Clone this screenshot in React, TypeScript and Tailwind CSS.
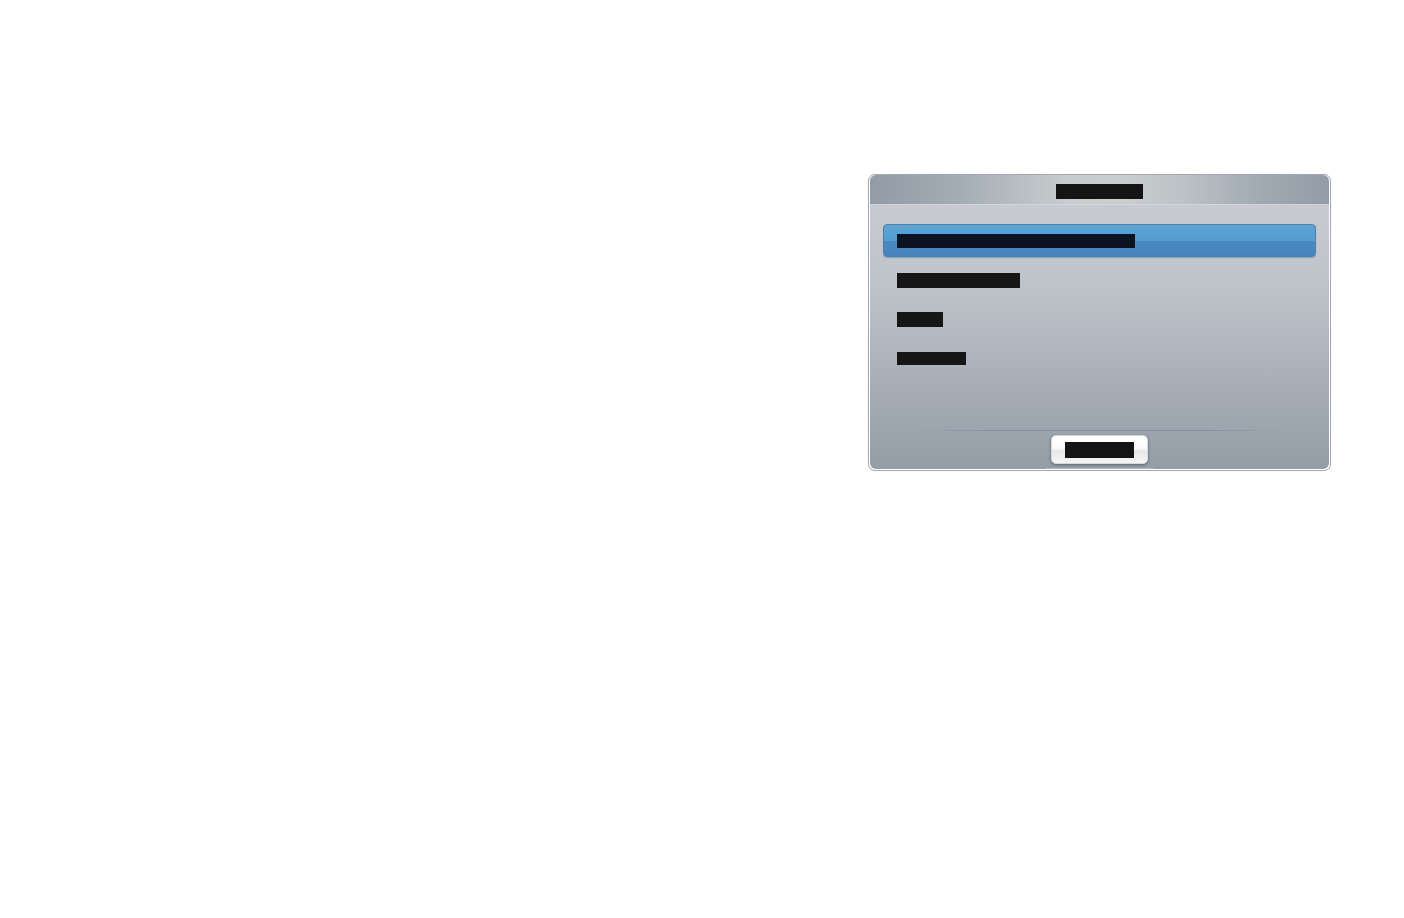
import React from "react";

const items = [
  { w: "w-[238px]", h: "h-[14px]", mt: "", selected: true },
  { w: "w-[123px]", h: "h-[15px]", mt: "mt-[1px]", selected: false },
  { w: "w-[46px]", h: "h-[15px]", mt: "mt-[2px]", selected: false },
  { w: "w-[69px]", h: "h-[13px]", mt: "mt-[2px]", selected: false },
];

export default function App() {
  return (
    <div className="min-h-screen w-full bg-white pt-[174px] pl-[868px] font-['Liberation_Sans',sans-serif]">
      <div className="w-[463px] h-[297px] rounded-[7px] border border-[#a4a8ad] bg-white px-px pb-px shadow-[0_0_1px_rgba(0,0,0,0.15)]">
        <div className="flex h-full flex-col overflow-hidden rounded-t-[6px] rounded-b-[6px]">
          {/* header */}
          <div className="flex h-[30px] shrink-0 items-center justify-center border-b border-[#d3d7da] bg-[linear-gradient(90deg,#929ba6_0%,#a5adb5_20%,#c6cccd_42%,#c9cecf_55%,#bcc3c6_68%,#a1a9b2_85%,#939ba6_100%)] pt-[4px]">
            <div className="h-[15px] w-[87px] bg-[#141414]" />
          </div>

          {/* body */}
          <div className="flex flex-1 flex-col bg-[linear-gradient(180deg,#c7cbd1_0%,#bec3c9_30%,#a9b0b8_65%,#949ca6_100%)]">
            <div className="flex flex-col gap-[6px] px-[13px] pt-[19px]">
              {items.map((it, i) => (
                <div
                  key={i}
                  className={
                    it.selected
                      ? "flex h-[33px] items-center rounded-[4px] border border-[#4f7fa8] bg-[linear-gradient(180deg,#5ba5d4_0%,#559ccd_50%,#4889c1_52%,#4784bd_100%)] px-[13px] shadow-[0_1px_1px_rgba(60,80,100,0.35)]"
                      : "flex h-[33px] items-center px-[14px]"
                  }
                >
                  <div className={`${it.w} ${it.h} ${it.mt} ${it.selected ? "bg-[#0d1220]" : "bg-[#161616]"}`} />
                </div>
              ))}
            </div>

            <div className="flex-1" />

            {/* footer */}
            <div className="flex flex-col items-center">
              <div className="h-px w-[360px] bg-[linear-gradient(90deg,rgba(130,138,148,0)_0%,#86909b_20%,#86909b_80%,rgba(130,138,148,0)_100%)]" />
              <div className="mt-[4px] flex h-[29px] w-[97px] items-center justify-center rounded-[5px] border border-[#d6d9dc] bg-[linear-gradient(180deg,#ffffff_0%,#fbfbfb_45%,#e6e7e8_55%,#f5f5f5_100%)] shadow-[0_1px_3px_rgba(40,50,60,0.55)]">
                <div className="h-[16px] w-[69px] bg-[#141414]" />
              </div>
              <div className="mt-[4px] h-px w-[107px] bg-[#b4bac1]" />
            </div>
          </div>
        </div>
      </div>
    </div>
  );
}
